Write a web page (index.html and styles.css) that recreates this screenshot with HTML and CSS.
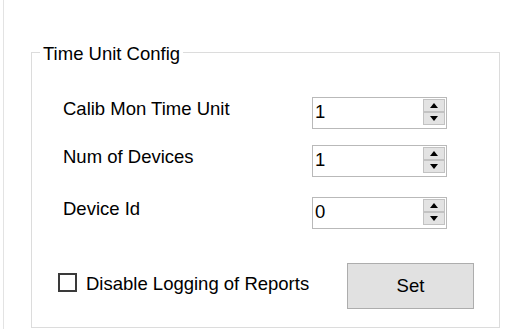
FILE: index.html
```html
<!DOCTYPE html>
<html lang="en">
<head>
    <meta charset="UTF-8">
    <meta name="viewport" content="width=device-width, initial-scale=1.0">
    <title>Time Unit Config</title>
    <link rel="stylesheet" href="styles.css">
</head>
<body>
    <div class="panel">
        <fieldset class="group">
            <legend>Time Unit Config</legend>

            <div class="row">
                <label class="row-label">Calib Mon Time Unit</label>
                <div class="spin">
                    <span class="spin-value">1</span>
                    <div class="spin-btns">
                        <span class="spin-btn up"></span>
                        <span class="spin-btn down"></span>
                    </div>
                </div>
            </div>
            <div class="row">
                <label class="row-label">Num of Devices</label>
                <div class="spin">
                    <span class="spin-value">1</span>
                    <div class="spin-btns">
                        <span class="spin-btn up"></span>
                        <span class="spin-btn down"></span>
                    </div>
                </div>
            </div>
            <div class="row row-wide">
                <label class="row-label">Device Id</label>
                <div class="spin">
                    <span class="spin-value">0</span>
                    <div class="spin-btns">
                        <span class="spin-btn up"></span>
                        <span class="spin-btn down"></span>
                    </div>
                </div>
            </div>

            <div class="actions">
                <label class="check">
                    <span class="check-box"></span>
                    <span>Disable Logging of Reports</span>
                </label>
                <button class="set-btn">Set</button>
            </div>
        </fieldset>
    </div>
</body>
</html>
```

FILE: styles.css
```css
body {
    margin: 0;
    background: #fff;
    font-family: "Liberation Sans", Arial, sans-serif;
    font-size: 18.5px;
    color: #000;
}
.panel {
    margin-left: 3px;
    border-left: 1px solid #e3e3e3;
    height: 329px;
    padding: 40px 0 0 27px;
    box-sizing: border-box;
    overflow: hidden;
}
.group {
    box-sizing: border-box;
    width: 469px;
    height: 288px;
    margin: 0;
    padding: 33px 0 0;
    border: 1px solid #dcdcdc;
}
.group legend {
    margin-left: 8px;
    padding: 4px 3px 0;
    line-height: 20px;
}
.row {
    display: flex;
    padding-left: 31px;
}
.row + .row {
    margin-top: 16px;
}
.row + .row-wide {
    margin-top: 20px;
}
.row-label {
    width: 249px;
    line-height: 24px;
}
.spin {
    display: flex;
    box-sizing: border-box;
    width: 135px;
    height: 32px;
    border: 1px solid #b9b9b9;
}
.spin-value {
    flex: 1;
    padding-left: 2px;
    line-height: 27px;
}
.spin-btns {
    display: flex;
    flex-direction: column;
    width: 22px;
    margin: 1px 1px 0 0;
}
.spin-btn {
    position: relative;
    height: 13px;
    background: #e3e3e3;
    border: 1px solid #c2c2c2;
    box-sizing: border-box;
}
.spin-btn::after {
    content: "";
    position: absolute;
    left: 6px;
    top: 3px;
    border-left: 4px solid transparent;
    border-right: 4px solid transparent;
}
.spin-btn.up::after {
    border-bottom: 5px solid #000;
}
.spin-btn.down::after {
    border-top: 5px solid #000;
}
.actions {
    display: grid;
    grid-template-columns: 289px 127px;
    margin-top: 34px;
    padding-left: 26px;
}
.check {
    display: flex;
    align-items: flex-start;
    gap: 9px;
    line-height: 24px;
    padding-top: 9px;
}
.check-box {
    width: 19px;
    height: 19px;
    margin-top: 1px;
    box-sizing: border-box;
    border: 2px solid #3a3a3a;
}
.set-btn {
    height: 46px;
    padding: 0;
    font: inherit;
    line-height: 44px;
    color: #000;
    background: #e1e1e1;
    border: 1px solid #adadad;
}
```
